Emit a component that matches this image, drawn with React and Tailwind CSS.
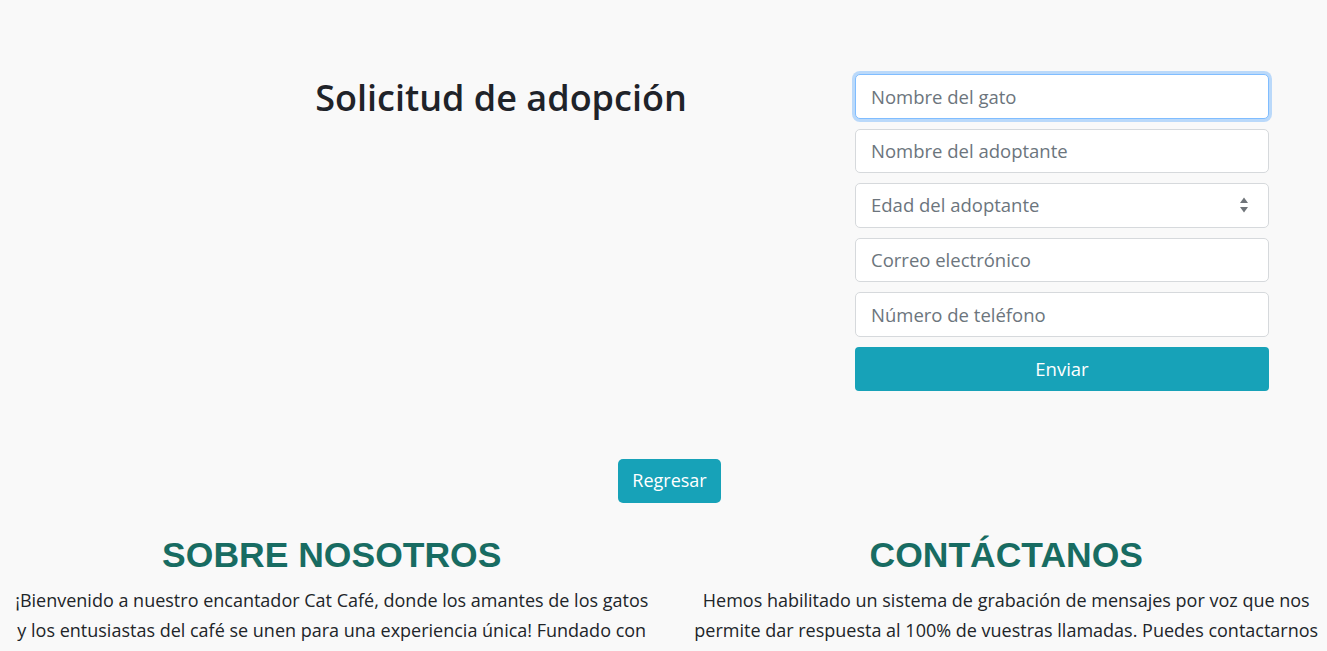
import React from "react";

const font = { fontFamily: '"Open Sans", "Noto Sans", sans-serif' };
const arial = { fontFamily: '"Liberation Sans", Arial, sans-serif' };

const Field = ({ placeholder, focused }) => (
  <input
    type="text"
    placeholder={placeholder}
    className={`h-[44.5px] w-full rounded-[5px] bg-white px-[15px] text-[18.5px] text-[#212529] placeholder:text-[#6c757d] outline-none ${
      focused
        ? "border border-[#80bdff] shadow-[0_0_0_3px_rgba(0,123,255,0.25)]"
        : "border border-[#d6d9dc]"
    }`}
  />
);

const SelectField = ({ placeholder }) => (
  <div className="relative flex h-[44.5px] w-full items-center rounded-[5px] border border-[#d6d9dc] bg-white px-[15px] text-[18.5px] text-[#6c757d]">
    <span>{placeholder}</span>
    <svg className="absolute right-[19px] top-1/2 -translate-y-1/2" width="10" height="18" viewBox="0 0 10 18">
      <path d="M5 1.5 L9 7 L1 7 Z" fill="#6f7479" />
      <path d="M1 11 L9 11 L5 16.5 Z" fill="#6f7479" />
    </svg>
  </div>
);

export default function App() {
  return (
    <div className="h-[651px] w-full overflow-hidden bg-[#f9f9f9]" style={font}>
      <div className="flex pt-[74px]">
        <div className="ml-[167px] w-[668px] text-center">
          <h1 className="text-[36px] font-semibold leading-[48px] text-[#1f2329]">Solicitud de adopción</h1>
        </div>
        <form className="ml-[20px] flex w-[414px] flex-col gap-[10px]" onSubmit={(e) => e.preventDefault()}>
          <Field placeholder="Nombre del gato" focused />
          <Field placeholder="Nombre del adoptante" />
          <SelectField placeholder="Edad del adoptante" />
          <Field placeholder="Correo electrónico" />
          <Field placeholder="Número de teléfono" />
          <button type="submit" className="h-[44px] w-full rounded-[4px] bg-[#17a2b8] text-[18.5px] text-white">
            Enviar
          </button>
        </form>
      </div>

      <div className="mt-[68px] flex justify-center pl-[12px]">
        <button className="h-[44px] rounded-[5px] bg-[#17a2b8] px-[14px] text-[18px] text-white">Regresar</button>
      </div>

      <div className="mt-[28px] grid grid-cols-2">
        <section className="px-[10px] text-center">
          <h2 className="text-[35.5px] font-bold leading-[48px] text-[#186c62]" style={arial}>
            SOBRE NOSOTROS
          </h2>
          <p className="mt-[6px] whitespace-nowrap text-[18px] leading-[30px] text-[#212529]">
            ¡Bienvenido a nuestro encantador Cat Café, donde los amantes de los gatos
            <br />
            y los entusiastas del café se unen para una experiencia única! Fundado con
            <br />
            la misión de crear un refugio acogedor para los felinos y amantes del café
          </p>
        </section>
        <section className="pl-[30px] pr-[8px] text-center">
          <h2 className="text-[35.5px] font-bold leading-[48px] text-[#186c62]" style={arial}>
            CONTÁCTANOS
          </h2>
          <p className="mt-[6px] whitespace-nowrap text-[18px] leading-[30px] text-[#212529]">
            Hemos habilitado un sistema de grabación de mensajes por voz que nos
            <br />
            permite dar respuesta al 100% de vuestras llamadas. Puedes contactarnos
            <br />
            en el teléfono 917 80 30 00 los 365 días del año, 24 horas al día. Gracias
          </p>
        </section>
      </div>
    </div>
  );
}
